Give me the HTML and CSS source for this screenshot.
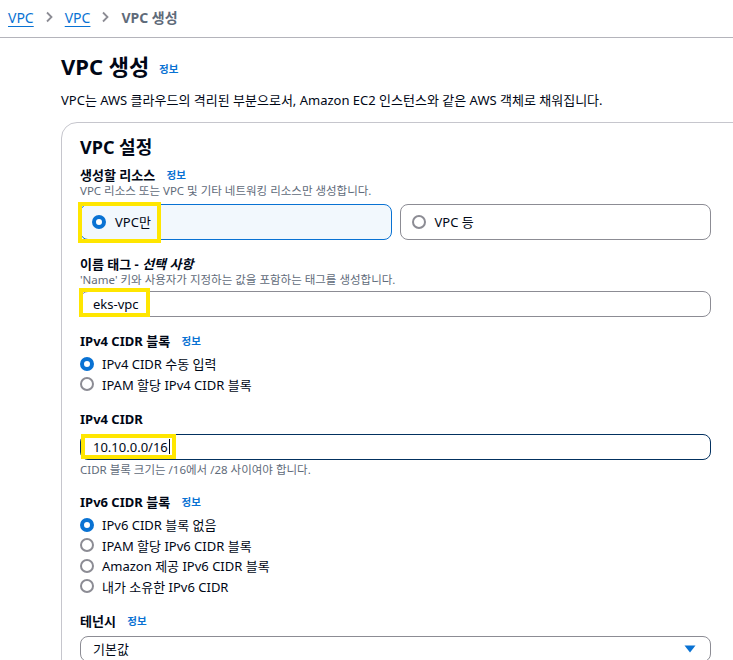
FILE: index.html
```html
<!DOCTYPE html>
<html lang="ko">
<head>
    <meta charset="UTF-8">
    <meta name="viewport" content="width=device-width, initial-scale=1.0">
    <title>VPC 생성</title>
    <link rel="stylesheet" href="styles.css">
</head>
<body>
    <nav class="breadcrumbs">
        <a href="#" class="crumb">VPC</a>
        <svg class="chev" width="7" height="12" viewBox="0 0 7 12"><polyline points="1,1.5 5.5,6 1,10.5" fill="none" stroke="#8c8c94" stroke-width="1.8"/></svg>
        <a href="#" class="crumb">VPC</a>
        <svg class="chev" width="7" height="12" viewBox="0 0 7 12"><polyline points="1,1.5 5.5,6 1,10.5" fill="none" stroke="#8c8c94" stroke-width="1.8"/></svg>
        <span class="crumb-current">VPC 생성</span>
    </nav>

    <main class="page">
        <h1 class="title">VPC 생성 <a href="#" class="info">정보</a></h1>
        <p class="intro">VPC는 AWS 클라우드의 격리된 부분으로서, Amazon EC2 인스턴스와 같은 AWS 객체로 채워집니다.</p>

        <section class="panel">
            <h2 class="panel-title">VPC 설정</h2>

            <div class="field first">
                <div class="label">생성할 리소스 <a href="#" class="info">정보</a></div>
                <div class="desc">VPC 리소스 또는 VPC 및 기타 네트워킹 리소스만 생성합니다.</div>
                <div class="tiles">
                    <div class="tile selected">
                        <span class="radio on"></span>VPC만
                        <span class="hl hl-tile"></span>
                    </div>
                    <div class="tile">
                        <span class="radio"></span>VPC 등
                    </div>
                </div>
            </div>

            <div class="field">
                <div class="label">이름 태그 - <em>선택 사항</em></div>
                <div class="desc">'Name' 키와 사용자가 지정하는 값을 포함하는 태그를 생성합니다.</div>
                <div class="input after-desc">
                    eks-vpc
                    <span class="hl hl-name"></span>
                </div>
            </div>

            <div class="field">
                <div class="label">IPv4 CIDR 블록 <a href="#" class="info">정보</a></div>
                <div class="options">
                    <div class="option"><span class="radio on"></span>IPv4 CIDR 수동 입력</div>
                    <div class="option"><span class="radio"></span>IPAM 할당 IPv4 CIDR 블록</div>
                </div>
            </div>

            <div class="field">
                <div class="label">IPv4 CIDR</div>
                <div class="input focused">
                    10.10.0.0/16<span class="caret"></span>
                    <span class="hl hl-cidr"></span>
                </div>
                <div class="desc hint">CIDR 블록 크기는 /16에서 /28 사이여야 합니다.</div>
            </div>

            <div class="field">
                <div class="label">IPv6 CIDR 블록 <a href="#" class="info">정보</a></div>
                <div class="options">
                    <div class="option"><span class="radio on"></span>IPv6 CIDR 블록 없음</div>
                    <div class="option"><span class="radio"></span>IPAM 할당 IPv6 CIDR 블록</div>
                    <div class="option"><span class="radio"></span>Amazon 제공 IPv6 CIDR 블록</div>
                    <div class="option"><span class="radio"></span>내가 소유한 IPv6 CIDR</div>
                </div>
            </div>

            <div class="field">
                <div class="label">테넌시 <a href="#" class="info">정보</a></div>
                <div class="input select">
                    기본값
                    <svg class="arrow" width="12" height="8" viewBox="0 0 12 8"><polygon points="0.5,0.5 11.5,0.5 6,7.5" fill="#0972d3"/></svg>
                </div>
            </div>
        </section>
    </main>
</body>
</html>
```

FILE: styles.css
```css
body {
    font-family: "Noto Sans", "Noto Sans CJK KR", sans-serif;
    font-size: 13px;
    color: #000716;
    background: #fff;
    margin: 0;
    overflow: hidden;
}

a {
    color: #0972d3;
}

/* breadcrumb bar */
.breadcrumbs {
    display: flex;
    align-items: center;
    gap: 12px;
    height: 34px;
    padding: 0 8px 3px;
    border-bottom: 1px solid #b4b4bb;
    font-size: 14px;
}

.crumb {
    text-decoration: underline;
    text-underline-offset: 3px;
}

.crumb-current {
    color: #5f6b7a;
    font-weight: bold;
}

.page {
    padding: 14px 0 0 61px;
}

.title {
    font-size: 22px;
    line-height: 28px;
    margin: 0;
    font-weight: bold;
}

.info {
    font-size: 10.5px;
    font-weight: bold;
    text-decoration: none;
    margin-left: 8px;
    vertical-align: 1px;
}

.title .info {
    margin-left: 4px;
    vertical-align: 2px;
}

.intro {
    font-size: 13px;
    line-height: 18px;
    margin: 8px 0 0;
}

/* container */
.panel {
    width: 631px;
    margin-top: 13px;
    padding: 12.5px 40px 20px 18px;
    border: 1px solid #c6c6cd;
    border-radius: 16px;
}

.panel-title {
    font-size: 18px;
    line-height: 22px;
    margin: 0;
    font-weight: bold;
}

.field {
    margin-top: 16px;
}

.field.first {
    margin-top: 9px;
}

.label {
    line-height: 16px;
    font-weight: bold;
}

.label em {
    font-style: italic;
}

.desc {
    font-size: 11.5px;
    line-height: 16px;
    color: #5f6b7a;
}

.hint {
    margin-top: 2px;
}

.tiles {
    display: grid;
    grid-template-columns: 1fr 1fr;
    gap: 8px;
    margin-top: 5px;
}

.tile {
    position: relative;
    display: flex;
    align-items: center;
    gap: 9px;
    height: 34px;
    padding: 0 11px;
    border: 1px solid #8c8c94;
    border-radius: 8px;
}

.tile.selected {
    background: #f2f8fd;
    border-color: #0972d3;
}

.radio {
    width: 10px;
    height: 10px;
    border: 2px solid #8c8c94;
    border-radius: 50%;
    background: #fff;
    flex-shrink: 0;
}

.radio.on {
    width: 6px;
    height: 6px;
    border: 4px solid #0972d3;
}

.options {
    margin-top: 5px;
}

.option {
    display: flex;
    align-items: center;
    gap: 8px;
    height: 20.5px;
}

.input {
    position: relative;
    display: flex;
    align-items: center;
    height: 24px;
    margin-top: 7px;
    padding: 0 12px;
    border: 1px solid #8c8c94;
    border-radius: 8px;
}

.input.after-desc {
    margin-top: 3px;
}

.input.focused {
    border-color: #033160;
}

.caret {
    display: inline-block;
    width: 1px;
    height: 15px;
    background: #000716;
    margin-left: 1px;
}

.select {
    justify-content: space-between;
}

.arrow {
    margin-right: 2px;
}

/* yellow annotation boxes */
.hl {
    position: absolute;
    border: 4px solid #ffe600;
    pointer-events: none;
}

.hl-tile {
    left: -3px;
    top: -3px;
    width: 75px;
    height: 33px;
}

.hl-name {
    left: -2px;
    top: -4px;
    width: 63px;
    height: 21px;
}

.hl-cidr {
    left: 0;
    top: -1px;
    width: 87px;
    height: 17px;
}
```
